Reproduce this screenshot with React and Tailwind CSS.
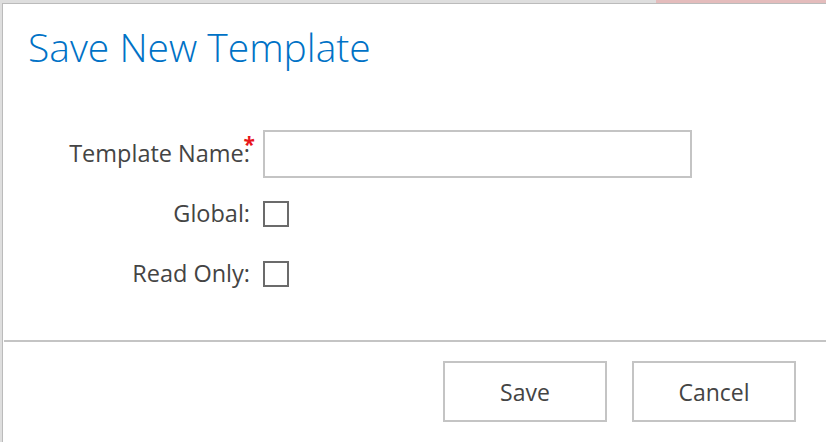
import React from "react";

const font = { fontFamily: '"Open Sans", "Noto Sans", sans-serif' };

function Field({ label, required, children }) {
  return (
    <div className="flex h-[48px] items-center">
      <div className="w-[247px] text-right">
        <span className="relative text-[23.5px] text-[#444444]">
          {label}
          {required && (
            <span className="absolute -right-[5px] -top-[3px] text-[21px] font-bold leading-none text-[#e8161b]">
              *
            </span>
          )}
        </span>
      </div>
      <div className="ml-[13px] flex items-center">{children}</div>
    </div>
  );
}

function Checkbox() {
  return <div className="h-[26px] w-[26px] border-2 border-[#6b6b6b] bg-white" />;
}

export default function App() {
  return (
    <div className="flex h-[442px] w-[826px] flex-col overflow-hidden bg-[#dedede]" style={font}>
      <div className="flex h-[3px] shrink-0">
        <div className="w-[656px] bg-[#dedede]" />
        <div className="flex-1 bg-[#e4bcbc]" />
      </div>
      <div className="flex flex-1">
        <div className="w-[2px] shrink-0 bg-[#dedede]" />
        <div className="flex flex-1 flex-col border-l border-t border-[#bbbbbb] bg-white">
          <h1 className="pl-[25px] pt-[21px] text-[39px] font-light leading-[44px] text-[#0072c6]">
            Save New Template
          </h1>

          <div className="mt-[61px] flex flex-col gap-3">
            <Field label="Template Name:" required>
              <div className="h-[48px] w-[429px] border-2 border-[#c4c4c4] bg-white" />
            </Field>
            <Field label="Global:">
              <Checkbox />
            </Field>
            <Field label="Read Only:">
              <Checkbox />
            </Field>
          </div>

          <div className="ml-px mt-[42px] h-[2px] bg-[#c4c4c4]" />

          <div className="mt-[19px] flex justify-end gap-[25px] pr-[30px]">
            <button className="h-[61px] w-[164px] border-2 border-[#c4c4c4] bg-white pt-[2px] text-[23px] text-[#444444]">
              Save
            </button>
            <button className="h-[61px] w-[164px] border-2 border-[#c4c4c4] bg-white pt-[2px] text-[23px] text-[#444444]">
              Cancel
            </button>
          </div>
        </div>
      </div>
    </div>
  );
}
